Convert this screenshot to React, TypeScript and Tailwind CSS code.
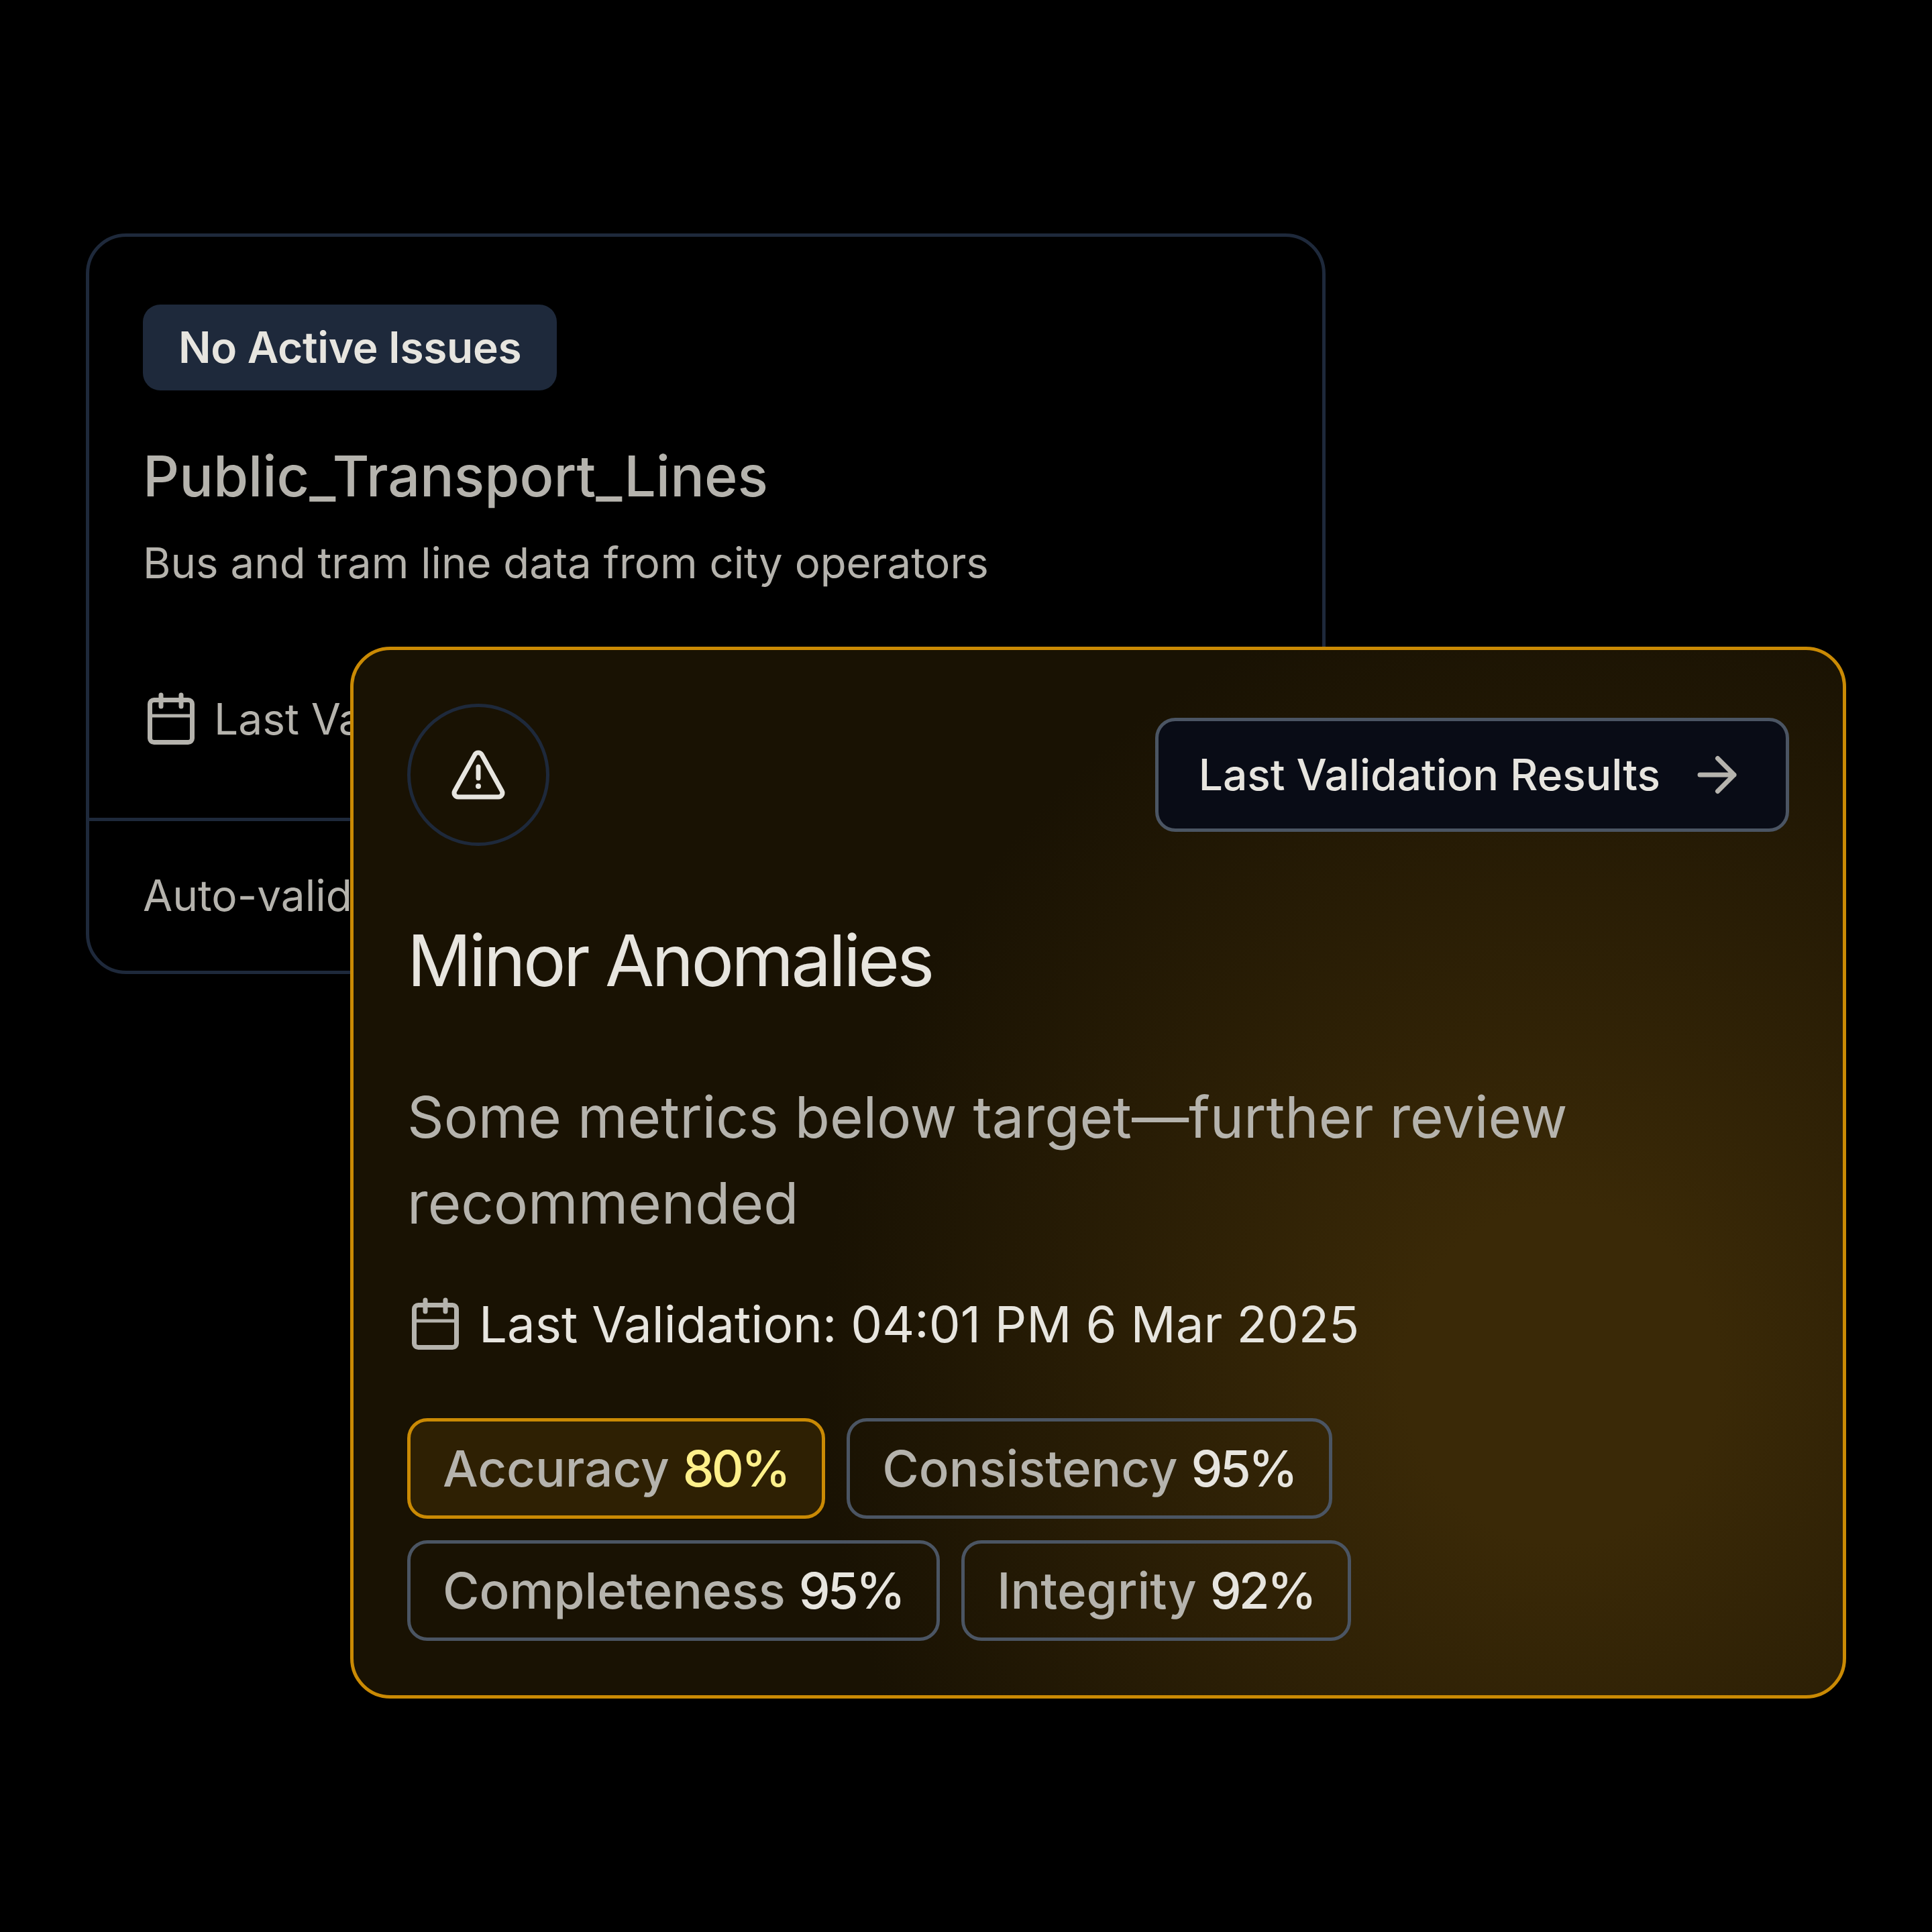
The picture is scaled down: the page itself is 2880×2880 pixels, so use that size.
const Cal = () => (
  <svg width="80" height="80" viewBox="0 0 80 80" fill="none" stroke="#b5b3ad" strokeWidth="7" className="shrink-0">
    <rect x="10.5" y="11.5" width="63" height="63" rx="6" />
    <path d="M10 35H74" strokeWidth="5" />
    <path d="M27 4V21M57 4V21" strokeLinecap="round" />
  </svg>
);

const Chip = ({ label, value, warn }: { label: string; value: string; warn?: boolean }) => (
  <div className={"rounded-[30px] border-[5px] pl-[48px] pr-[50px] py-[32px] text-[74.4px] leading-[76px] font-medium " + (warn ? "border-[#ca8a04] bg-[#ca8a0420]" : "border-[#4b5563]")}>
    <span className="text-[#b5b3ad]">{label} </span>
    <span className={"tracking-[-0.05em] " + (warn ? "text-[#fef08a]" : "text-[#e7e5df]")}>{value}</span>
  </div>
);

export default function App() {
  return (
    <div className="relative h-[2880px] w-[2880px] bg-black pl-[128px] pt-[348px] font-['Inter',sans-serif]">
      <div className="w-[1848px] h-[1104px] rounded-[60px] border-[5px] border-[#1e293b] flex flex-col">
        <div className="flex-1 px-[80px] pt-[101px]">
          <div className="inline-block rounded-[26px] bg-[#1e293b] px-[53px] py-[32px] text-[64px] leading-[64px] font-semibold tracking-[-0.005em] text-[#e7e5df]">No Active Issues</div>
          <div className="mt-[67px] text-[84.4px] leading-[120px] font-medium text-[#b5b3ad]">Public_Transport_Lines</div>
          <div className="mt-[22px] text-[63.5px] leading-[96px] text-[#b5b3ad]">Bus and tram line data from city operators</div>
          <div className="mt-[145px] flex items-center gap-[26px] text-[64px] leading-[80px] text-[#b5b3ad]">
            <Cal />
            <span>Last Validation</span>
          </div>
        </div>
        <div className="border-t-[5px] border-[#1e293b] h-[228px] px-[80px] pt-[63px] text-[64px] leading-[96px] text-[#b5b3ad]">Auto-validation</div>
      </div>

      <div className="absolute left-[522px] top-[964px] w-[2230px] h-[1568px] rounded-[60px] border-[5px] border-[#ca8a04] bg-[#191203] bg-[radial-gradient(ellipse_1300px_1400px_at_1800px_1080px,#3a2907_0%,#3a2907_18%,#191203_85%)] p-[80px] flex flex-col">
        <div className="flex items-start justify-between">
          <div className="flex h-[212px] w-[212px] items-center justify-center rounded-full border-[5px] border-[#1e293b]">
            <svg width="96" height="96" viewBox="0 0 96 96" fill="none" stroke="#e7e5df" strokeWidth="7">
              <path d="M42.8 18.1A6 6 0 0 1 53.2 18.1L83.2 72.1A6 6 0 0 1 78 81L18 81A6 6 0 0 1 12.8 72.1Z" />
              <path d="M48 36V53" strokeLinecap="round" />
              <circle cx="48" cy="65" r="4" fill="#e7e5df" stroke="none" />
            </svg>
          </div>
          <div className="mt-[21px] flex h-[170px] items-center rounded-[30px] border-[5px] border-[#4b5563] bg-[#090c16] pl-[60px] pr-[65px] gap-[50px]">
            <span className="text-[64px] leading-[80px] font-medium text-[#e7e5df]">Last Validation Results</span>
            <svg width="72" height="72" viewBox="0 0 72 72" fill="none" stroke="#b5b3ad" strokeWidth="7" strokeLinecap="round" strokeLinejoin="round">
              <path d="M9 36H60M35.5 11.5L60 36L35.5 60.5" />
            </svg>
          </div>
        </div>
        <div className="mt-[101px] text-[106px] leading-[140px] tracking-[-0.035em] text-[#e7e5df]">Minor Anomalies</div>
        <div className="mt-[99px] text-[85.2px] leading-[128px] text-[#b5b3ad]">Some metrics below target—further review recommended</div>
        <div className="mt-[77px] flex items-center gap-[27px] text-[74.4px] leading-[80px] text-[#e7e5df]">
          <Cal />
          <span>Last Validation: 04:01 PM 6 Mar 2025</span>
        </div>
        <div className="mt-[100px] flex flex-wrap gap-[32px]">
          <Chip label="Accuracy" value="80%" warn />
          <Chip label="Consistency" value="95%" />
          <Chip label="Completeness" value="95%" />
          <Chip label="Integrity" value="92%" />
        </div>
      </div>
    </div>
  );
}
